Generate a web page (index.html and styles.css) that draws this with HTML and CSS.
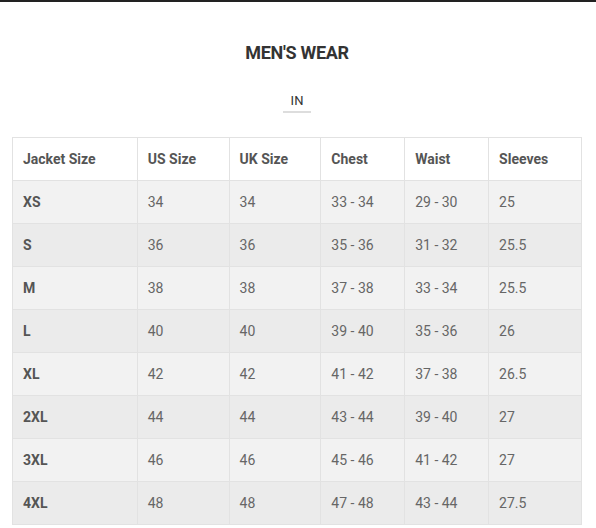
FILE: index.html
```html
<!DOCTYPE html>
<html>
<head>
<meta charset="utf-8">
<link rel="stylesheet" href="styles.css">
</head>
<body>
<div class="topbar"></div>
<main class="page">
  <h1 class="title">MEN'S WEAR</h1>
  <div class="units"><span class="unit">IN</span></div>
  <table class="sizes">
    <thead>
      <tr><th class="c1">Jacket Size</th><th class="c2">US Size</th><th class="c3">UK Size</th><th class="c4">Chest</th><th class="c5">Waist</th><th class="c6">Sleeves</th></tr>
    </thead>
    <tbody>
      <tr><th>XS</th><td>34</td><td>34</td><td>33 - 34</td><td>29 - 30</td><td>25</td></tr>
      <tr><th>S</th><td>36</td><td>36</td><td>35 - 36</td><td>31 - 32</td><td>25.5</td></tr>
      <tr><th>M</th><td>38</td><td>38</td><td>37 - 38</td><td>33 - 34</td><td>25.5</td></tr>
      <tr><th>L</th><td>40</td><td>40</td><td>39 - 40</td><td>35 - 36</td><td>26</td></tr>
      <tr><th>XL</th><td>42</td><td>42</td><td>41 - 42</td><td>37 - 38</td><td>26.5</td></tr>
      <tr><th>2XL</th><td>44</td><td>44</td><td>43 - 44</td><td>39 - 40</td><td>27</td></tr>
      <tr><th>3XL</th><td>46</td><td>46</td><td>45 - 46</td><td>41 - 42</td><td>27</td></tr>
      <tr><th>4XL</th><td>48</td><td>48</td><td>47 - 48</td><td>43 - 44</td><td>27.5</td></tr>
    </tbody>
  </table>
</main>
</body>
</html>
```
FILE: styles.css
```css
html, body {
  margin: 0;
  padding: 0;
  background: #fff;
  font-family: Roboto, "Liberation Sans", sans-serif;
}
.topbar {
  height: 2px;
  background: #222;
}
.page {
  padding: 0 14px 0 12px;
}
.title {
  margin: 0;
  padding-top: 40px;
  font-size: 18px;
  line-height: 22px;
  font-weight: 700;
  color: #333;
  text-align: center;
  letter-spacing: -0.3px;
}
.units {
  margin-top: 26px;
  text-align: center;
  height: 22px;
}
.unit {
  display: inline-block;
  font-size: 13px;
  line-height: 16px;
  color: #333;
  padding: 0 8px 2px;
  border-bottom: 2px solid #ddd;
}
.sizes {
  margin-top: 25px;
  width: 570px;
  border-collapse: collapse;
  font-size: 14px;
  color: #666;
}
.sizes th, .sizes td {
  border: 1px solid #e2e2e2;
  height: 42px;
  padding: 0 0 0 10px;
  text-align: left;
  vertical-align: middle;
}
.sizes thead th {
  background: #fff;
  font-weight: 700;
  color: #555;
}
.sizes tbody th {
  font-weight: 700;
  color: #555;
}
.sizes tbody tr:nth-child(odd) { background: #f2f2f2; }
.sizes tbody tr:nth-child(even) { background: #ebebeb; }
.c1 { width: 114px; }
.c2 { width: 81px; }
.c3 { width: 81px; }
.c4 { width: 73px; }
.c5 { width: 73px; }
.c6 { width: 82px; }
```
